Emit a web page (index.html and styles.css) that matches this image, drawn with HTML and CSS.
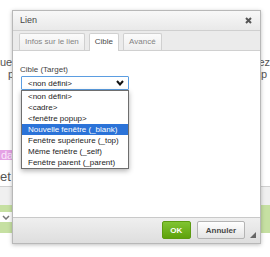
FILE: index.html
```html
<!DOCTYPE html>
<html lang="fr">
<head>
    <meta charset="UTF-8">
    <title>Lien</title>
    <link rel="stylesheet" href="styles.css">
</head>
<body>

    <div class="page">
        <div class="line"><span>ue,</span><span>ez</span></div>
        <div class="line line-2"><span class="indent">pe</span><span class="tail">p</span></div>
        <div class="line line-mark"><span class="mark">dans</span></div>
        <div class="line line-et"><span>et</span></div>
        <div class="toolbar"></div>
        <div class="green-row">
            <div class="fake-select">
                <svg width="8" height="5" viewBox="0 0 8 5"><polyline points="1,1 4,4 7,1" fill="none" stroke="#777" stroke-width="1.5"/></svg>
            </div>
        </div>
    </div>

    <div class="dialog">
        <div class="dialog-title">
            <span>Lien</span>
            <a class="close" title="Fermer">
                <svg width="7" height="7" viewBox="0 0 7 7"><path d="M1 1 L6 6 M6 1 L1 6" stroke="#555" stroke-width="2"/></svg>
            </a>
        </div>

        <div class="tabs">
            <div class="tab">Infos sur le lien</div>
            <div class="tab active">Cible</div>
            <div class="tab">Avancé</div>
        </div>

        <div class="dialog-body">
            <label class="field-label">Cible (Target)</label>
            <div class="field">
                <div class="select">
                    <span>&lt;non défini&gt;</span>
                    <svg width="8" height="6" viewBox="0 0 8 6"><polyline points="1,1 4,4.5 7,1" fill="none" stroke="#111" stroke-width="2"/></svg>
                </div>
                <ul class="options">
                    <li>&lt;non défini&gt;</li>
                    <li>&lt;cadre&gt;</li>
                    <li>&lt;fenêtre popup&gt;</li>
                    <li class="selected">Nouvelle fenêtre (_blank)</li>
                    <li>Fenêtre supérieure (_top)</li>
                    <li>Même fenêtre (_self)</li>
                    <li>Fenêtre parent (_parent)</li>
                </ul>
            </div>
        </div>

        <div class="dialog-footer">
            <button class="btn btn-ok">OK</button>
            <button class="btn">Annuler</button>
            <span class="grip"></span>
        </div>
    </div>

</body>
</html>
```
FILE: styles.css
```css
body {
    margin: 0;
    background-color: white;
    font-family: "Liberation Sans", Arial, sans-serif;
}

/* page behind the dialog */
.page {
    padding-top: 56px;
    font-size: 11px;
    color: #555;
}
.line {
    display: flex;
    justify-content: space-between;
    height: 12px;
    line-height: 12px;
}
.indent {
    padding-left: 8px;
}
.tail {
    padding-right: 3px;
}
.line-mark {
    margin-top: 70px;
    height: 10px;
    line-height: 10px;
}
.mark {
    background-color: #e5a2e5;
    color: #fbe9fb;
    padding: 0 6px 0 1px;
}
.line-et {
    margin-top: 11px;
    font-size: 13px;
}
.toolbar {
    margin-top: 3px;
    height: 18px;
    background-color: #f0f0f0;
    border-top: 1px solid #d0d0d0;
}
.green-row {
    height: 28px;
    background-color: #c6e0a2;
    padding-top: 7px;
    box-sizing: border-box;
}
.fake-select {
    width: 40px;
    height: 10px;
    background-color: white;
    display: flex;
    align-items: center;
    padding-left: 2px;
}

/* dialog */
.dialog {
    position: absolute;
    left: 12px;
    top: 10px;
    width: 247px;
    border: 1px solid #b8b8b8;
    box-shadow: 0 1px 4px rgba(0, 0, 0, 0.25);
    font-size: 8px;
    color: #333;
}
.dialog-title {
    height: 19px;
    line-height: 19px;
    padding: 0 7px;
    font-size: 9px;
    color: #474747;
    background: linear-gradient(#f8f8f8, #e9e9e9);
    border-bottom: 1px solid #cfcfcf;
    display: flex;
    justify-content: space-between;
    align-items: center;
}
.close {
    display: flex;
    cursor: pointer;
    margin-right: 1px;
}
.tabs {
    height: 19px;
    background-color: #ebebeb;
    border-bottom: 1px solid #d0d0d0;
    padding-left: 6px;
    display: flex;
    align-items: flex-end;
    gap: 4px;
}
.tab {
    height: 16px;
    line-height: 16px;
    padding: 0 5px;
    border: 1px solid #d0d0d0;
    border-bottom: none;
    border-radius: 2px 2px 0 0;
    background: linear-gradient(#fbfbfb, #eeeeee);
    color: #838383;
}
.tab.active {
    height: 17px;
    margin-bottom: -1px;
    background: white;
    color: #4a4a4a;
}
.dialog-body {
    height: 166px;
    box-sizing: border-box;
    background-color: white;
    padding: 14px 7px 0;
}
.field-label {
    display: block;
    height: 10px;
    line-height: 10px;
    color: #444;
}
.field {
    position: relative;
    width: 108px;
    margin: 1px 0 0 1px;
}
.select {
    height: 14px;
    box-sizing: border-box;
    border: 1px solid #5b9de1;
    border-radius: 1px;
    padding: 0 4px 0 6px;
    display: flex;
    justify-content: space-between;
    align-items: center;
    color: #222;
}
.options {
    position: absolute;
    top: 14px;
    left: 0;
    width: 108px;
    box-sizing: border-box;
    margin: 0;
    padding: 0;
    list-style: none;
    background: white;
    border: 1px solid #6e6e6e;
    box-shadow: 0 2px 5px rgba(0, 0, 0, 0.3);
    color: #1c1c1c;
}
.options li {
    height: 11px;
    line-height: 11px;
    padding-left: 6px;
    white-space: nowrap;
}
.options li.selected {
    background-color: #2b73d8;
    color: white;
}
.dialog-footer {
    position: relative;
    height: 26px;
    box-sizing: border-box;
    border-top: 1px solid #c9c9c9;
    background: linear-gradient(#efefef, #dedede);
    padding: 3px 15px 0 0;
    display: flex;
    justify-content: flex-end;
    gap: 6px;
}
.btn {
    height: 18px;
    padding: 0 8px;
    border: 1px solid #b4b4b4;
    border-radius: 2px;
    background: linear-gradient(#ffffff, #e4e4e4);
    font-family: "Liberation Sans", Arial, sans-serif;
    font-size: 8px;
    font-weight: bold;
    color: #474747;
    cursor: pointer;
}
.btn-ok {
    width: 29px;
    padding: 0;
    border-color: #5c9b10;
    background: linear-gradient(#80c432, #5ea20b);
    color: white;
}
.grip {
    position: absolute;
    right: 4px;
    bottom: 5px;
    width: 0;
    height: 0;
    border-left: 6px solid transparent;
    border-bottom: 6px solid #666;
}
```
